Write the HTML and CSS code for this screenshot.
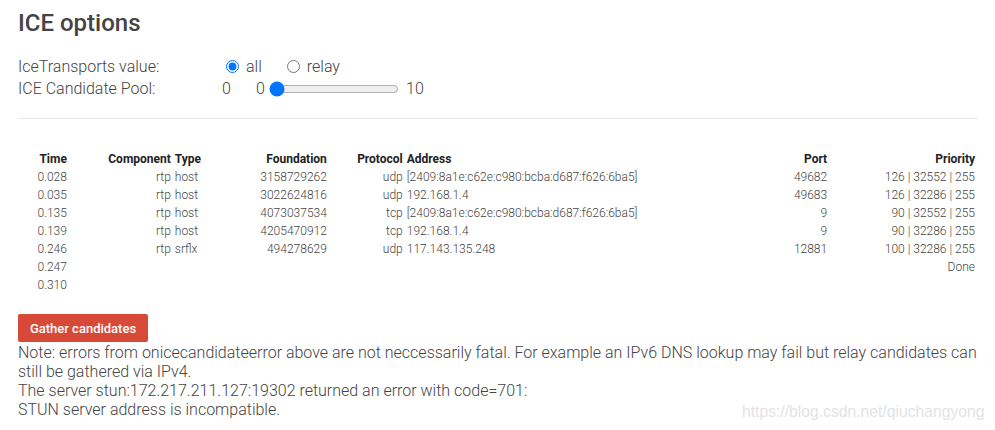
FILE: index.html
```html
<!DOCTYPE html>
<html lang="en">
<head>
<meta charset="utf-8">
<title>Trickle ICE</title>
<link rel="stylesheet" href="styles.css">
</head>
<body>
<div class="container">
  <h2 class="title">ICE options</h2>
  <div class="opt-row">
    <span class="opt-label">IceTransports value:</span>
    <input type="radio" name="transports" id="all" class="radio" checked><label for="all" class="radio-label">all</label>
    <input type="radio" name="transports" id="relay" class="radio radio-second"><label for="relay" class="radio-label">relay</label>
  </div>
  <div class="opt-row">
    <span class="opt-label">ICE Candidate Pool:</span>
    <span class="pool-value">0</span>
    <span class="range-min">0</span>
    <input type="range" min="0" max="10" value="0" class="range">
    <span class="range-max">10</span>
  </div>
  <hr class="divider">
  <table class="candidates">
    <thead>
      <tr>
        <th class="c-time">Time</th>
        <th class="c-comp">Component</th>
        <th class="c-type left">Type</th>
        <th class="c-found">Foundation</th>
        <th class="c-proto">Protocol</th>
        <th class="c-addr left">Address</th>
        <th class="c-port">Port</th>
        <th class="c-prio">Priority</th>
      </tr>
    </thead>
    <tbody>
      <tr><td>0.028</td><td>rtp</td><td class="left">host</td><td>3158729262</td><td>udp</td><td class="left">[2409:8a1e:c62e:c980:bcba:d687:f626:6ba5]</td><td>49682</td><td>126 | 32552 | 255</td></tr>
      <tr><td>0.035</td><td>rtp</td><td class="left">host</td><td>3022624816</td><td>udp</td><td class="left">192.168.1.4</td><td>49683</td><td>126 | 32286 | 255</td></tr>
      <tr><td>0.135</td><td>rtp</td><td class="left">host</td><td>4073037534</td><td>tcp</td><td class="left">[2409:8a1e:c62e:c980:bcba:d687:f626:6ba5]</td><td>9</td><td>90 | 32552 | 255</td></tr>
      <tr><td>0.139</td><td>rtp</td><td class="left">host</td><td>4205470912</td><td>tcp</td><td class="left">192.168.1.4</td><td>9</td><td>90 | 32286 | 255</td></tr>
      <tr><td>0.246</td><td>rtp</td><td class="left">srflx</td><td>494278629</td><td>udp</td><td class="left">117.143.135.248</td><td>12881</td><td>100 | 32286 | 255</td></tr>
      <tr><td>0.247</td><td></td><td class="left"></td><td></td><td></td><td class="left"></td><td></td><td>Done</td></tr>
      <tr><td>0.310</td><td></td><td class="left"></td><td></td><td></td><td class="left"></td><td></td><td></td></tr>
    </tbody>
  </table>
  <button class="gather">Gather candidates</button>
  <div class="note">Note: errors from onicecandidateerror above are not neccessarily fatal. For example an IPv6 DNS lookup may fail but relay candidates can still be gathered via IPv4.</div>
  <div class="note">The server stun:172.217.211.127:19302 returned an error with code=701:</div>
  <div class="note">STUN server address is incompatible.</div>
</div>
<div class="watermark">https://blog.csdn.net/qiuchangyong</div>
</body>
</html>
```

FILE: styles.css
```css
html, body {
  margin: 0;
  padding: 0;
  background: #fff;
}
body {
  font-family: Roboto, "Liberation Sans", sans-serif;
  font-weight: 300;
  color: #444;
  position: relative;
  height: 430px;
  overflow: hidden;
}
.container {
  width: 960px;
  margin-left: 18px;
  padding-top: 9px;
}
.title {
  margin: 0;
  font-size: 24px;
  line-height: 28px;
  font-weight: 500;
  color: #444;
}
.opt-row {
  display: flex;
  align-items: center;
  height: 21px;
  font-size: 16px;
  line-height: 21px;
}
.title + .opt-row {
  margin-top: 19px;
}
.opt-row + .opt-row {
  margin-top: 1px;
}
.opt-label {
  width: 203px;
  flex: none;
}
.radio {
  margin: 0 3px 0 5px;
  width: 13px;
  height: 13px;
  flex: none;
}
.radio-second {
  margin-left: 25px;
}
.radio-label {
  margin-left: 4px;
}
.pool-value {
  margin-left: 1px;
  width: 34px;
}
.range-min {
  width: 9px;
}
.range {
  margin: 0 5px 0 4px;
  width: 130px;
  height: 16px;
  flex: none;
}
.range-max {
  margin-left: 2px;
}
.divider {
  margin: 19px 0 0 0;
  border: none;
  border-top: 1px solid #e6e6e6;
  height: 0;
}
.candidates {
  margin-top: 30px;
  width: 960px;
  border-spacing: 2px;
  font-size: 12px;
  line-height: 14px;
  color: #444;
}
.candidates th {
  font-weight: 700;
  color: #222;
  text-align: right;
  padding: 1px;
  white-space: nowrap;
}
.candidates td {
  text-align: right;
  padding: 1px;
  white-space: nowrap;
}
.candidates th.left,
.candidates td.left {
  text-align: left;
}
.c-time { width: 46px; }
.c-comp { width: 100px; }
.c-type { width: 25px; }
.c-found { width: 122px; }
.c-proto { width: 72px; }
.c-addr { width: 234px; }
.c-port { width: 183px; }
.c-prio { width: 144px; }
.gather {
  display: block;
  margin: 19px 0 0 0;
  width: 130px;
  height: 28px;
  padding: 0;
  border: none;
  border-radius: 2px;
  background: #d84a38;
  color: #fff;
  font-family: Roboto, "Liberation Sans", sans-serif;
  font-size: 13px;
  font-weight: 500;
}
.note {
  font-size: 16px;
  line-height: 19px;
}
.gather + .note {
  margin-top: 1px;
}
.watermark {
  position: absolute;
  left: 742px;
  top: 403px;
  font-family: "Liberation Sans", Arial, sans-serif;
  font-size: 15.7px;
  line-height: 18px;
  color: #e3e3e3;
  white-space: nowrap;
}
```
